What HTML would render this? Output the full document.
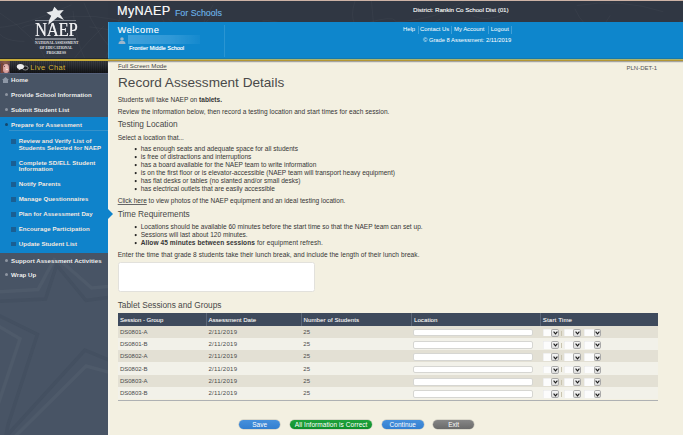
<!DOCTYPE html>
<html><head><meta charset="utf-8"><style>
html,body{margin:0;padding:0;width:683px;height:435px;overflow:hidden;background:#f3f0e1;font-family:"Liberation Sans",sans-serif;}
u{text-decoration:underline;}
</style></head><body>
<div style="position:absolute;left:0px;top:0px;width:683px;height:1px;background:#cdb3a6"></div>
<div style="position:absolute;left:0px;top:1px;width:683px;height:21px;background:#303743"></div>
<div style="position:absolute;left:0px;top:1px;width:108px;height:58px;background:#313844"></div>
<svg style="position:absolute;left:0;top:1px" width="683" height="58" viewBox="0 1 683 58"><path d="M213.2 4.8 Q207.5 14.0 199.6 31.2 M21.8 28.0 Q35.3 18.8 74.6 34.2 M285.7 48.7 Q307.8 69.7 322.2 63.7 M395.5 20.8 Q392.3 15.5 367.6 22.9 M83.9 2.7 Q96.4 37.3 128.0 67.0 M440.0 19.2 Q424.6 24.8 435.7 48.0 M469.9 22.8 Q485.9 43.1 504.7 75.4 M552.0 40.4 Q575.2 73.3 596.8 83.7 M505.2 13.7 Q486.4 22.4 472.6 15.7 M89.4 26.8 Q131.3 33.2 157.3 35.2 M610.3 15.4 Q594.4 40.1 573.7 67.4 M584.8 56.4 Q574.4 96.4 590.3 124.3 M445.9 59.6 Q424.1 76.2 409.1 82.6 M-3.8 25.0 Q-2.9 41.3 24.4 41.4 M73.1 11.1 Q74.3 48.0 100.6 88.0 M375.6 52.4 Q334.7 71.7 307.2 96.1 M238.3 52.5 Q211.4 46.7 203.8 57.1 M148.0 26.5 Q127.3 44.3 136.4 67.0 M245.9 31.8 Q211.8 40.5 176.7 42.1 M466.9 -1.5 Q442.1 19.2 394.9 22.0 M262.5 20.9 Q280.8 18.5 325.3 42.1 M130.3 5.5 Q122.2 7.5 144.0 30.5 M53.1 18.6 Q97.3 11.4 134.6 25.2 M161.6 17.6 Q178.9 47.4 175.3 47.6 M315.5 26.4 Q326.0 23.6 346.0 34.9 M576.8 5.5 Q620.9 -2.0 663.4 11.8 M371.1 -3.2 Q378.1 46.8 363.3 85.0 M168.0 18.8 Q201.5 46.0 233.1 56.5 M217.4 9.5 Q191.0 43.5 143.5 59.2 M569.2 43.1 Q587.1 48.1 613.6 81.4 M0.1 13.2 Q37.8 37.0 48.2 64.1 M654.7 59.2 Q622.2 54.5 606.4 66.1 M121.6 8.3 Q116.0 46.3 89.9 85.5 M450.1 47.0 Q495.2 64.4 515.7 64.9 M520.1 26.1 Q547.4 55.4 584.7 66.7 M679.6 20.7 Q699.5 52.0 706.0 103.2 M71.5 4.8 Q23.9 26.0 -2.5 27.6 M685.8 37.7 Q688.5 50.2 713.3 91.8 M679.0 37.2 Q673.5 91.1 671.9 122.6 M574.8 8.7 Q582.5 27.0 605.8 40.0 M166.7 22.2 Q200.9 37.8 243.9 55.9 M400.0 53.8 Q410.5 95.8 420.9 135.8 M356.9 -3.8 Q345.5 23.3 363.8 32.5 M104.1 25.8 Q79.0 49.6 64.3 72.3 M379.9 46.0 Q401.4 49.3 438.0 66.1 M536.0 28.0 Q541.2 62.8 521.7 101.0" fill="none" stroke="rgba(255,255,255,0.045)" stroke-width="0.8"/></svg>
<div style="position:absolute;left:108px;top:22px;width:575px;height:37px;background:#0e86cc"></div>
<div style="position:absolute;left:108px;top:22px;width:1px;height:37px;background:#3da0d8"></div>
<div style="position:absolute;left:224px;top:25px;width:1px;height:32px;background:#2a95d2"></div>
<div style="position:absolute;left:0px;top:58px;width:108px;height:1px;background:#25292c"></div>
<div style="position:absolute;left:0px;top:59px;width:108px;height:2px;background:#c9ad3a"></div>
<div style="position:absolute;left:108px;top:58px;width:575px;height:1px;background:#1779ab"></div>
<div style="position:absolute;left:108px;top:59px;width:575px;height:1px;background:#acb36c"></div>
<div style="position:absolute;left:108px;top:60px;width:575px;height:1px;background:#b39634"></div>
<div style="position:absolute;left:108px;top:61px;width:575px;height:1px;background:#a4a4a0"></div>
<div style="position:absolute;left:108px;top:62px;width:575px;height:1px;background:#e0ded4"></div>
<div style="position:absolute;left:108px;top:63px;width:2px;height:372px;background:#f6f4ea"></div>
<div style="position:absolute;left:117px;top:4.79px;font:normal 12.6px/1 'Liberation Sans', sans-serif;color:#f6f6f6;letter-spacing:0.4px;white-space:nowrap;text-shadow:0.2px 0 0 rgba(246,246,246,0.6)">MyNAEP</div>
<div style="position:absolute;left:175px;top:8.82px;font:normal 8.8px/1 'Liberation Sans', sans-serif;color:#68ade2;letter-spacing:0px;white-space:nowrap;text-shadow:0.15px 0 0 rgba(104,173,226,0.5)">For Schools</div>
<div style="position:absolute;left:117.6px;top:26.48px;font:normal 9.2px/1 'Liberation Sans', sans-serif;color:#f4f8fb;letter-spacing:0.52px;white-space:nowrap;text-shadow:0.15px 0 0 rgba(244,248,251,0.5)">Welcome</div>
<div style="position:absolute;left:128px;top:35.2px;width:72px;height:8.799999999999997px;background:linear-gradient(90deg,rgba(80,170,225,0.75),rgba(70,165,222,0.6) 60%,rgba(60,160,220,0.15));filter:blur(0.6px)"></div>
<svg style="position:absolute;left:118px;top:37px" width="8" height="7" viewBox="0 0 8 8"><circle cx="4" cy="2.4" r="2.0" fill="#9db6cb"/><path d="M0 8 C0 5 1.5 4.6 4 4.6 C6.5 4.6 8 5 8 8Z" fill="#9db6cb"/></svg>
<div style="position:absolute;left:129px;top:45.93px;font:normal 5.5px/1 'Liberation Sans', sans-serif;color:#ffffff;letter-spacing:0px;white-space:nowrap;text-shadow:0.3px 0 0 rgba(255,255,255,0.7)">Frontier Middle School</div>
<div style="position:absolute;left:413px;top:7.22px;font:normal 6.1px/1 'Liberation Sans', sans-serif;color:#f2f2f2;letter-spacing:0px;white-space:nowrap;text-shadow:0.25px 0 0 rgba(240,240,240,0.6)">District: Rankin Co School Dist (01)</div>
<div style="position:absolute;left:403px;top:27.19px;font:normal 5.9px/1 'Liberation Sans', sans-serif;color:#fff;letter-spacing:0px;white-space:nowrap;">Help</div>
<div style="position:absolute;left:420px;top:27.19px;font:normal 5.9px/1 'Liberation Sans', sans-serif;color:#fff;letter-spacing:0px;white-space:nowrap;">Contact Us</div>
<div style="position:absolute;left:454px;top:27.19px;font:normal 5.9px/1 'Liberation Sans', sans-serif;color:#fff;letter-spacing:0px;white-space:nowrap;">My Account</div>
<div style="position:absolute;left:490.8px;top:27.19px;font:normal 5.9px/1 'Liberation Sans', sans-serif;color:#fff;letter-spacing:0px;white-space:nowrap;">Logout</div>
<div style="position:absolute;left:417.7px;top:25.5px;width:0.6999999999999886px;height:8.0px;background:rgba(255,255,255,0.22)"></div>
<div style="position:absolute;left:451.4px;top:25.5px;width:0.6999999999999886px;height:8.0px;background:rgba(255,255,255,0.22)"></div>
<div style="position:absolute;left:487.5px;top:25.5px;width:0.6999999999999886px;height:8.0px;background:rgba(255,255,255,0.22)"></div>
<div style="position:absolute;left:511px;top:25.5px;width:0.6999999999999886px;height:8.0px;background:rgba(255,255,255,0.22)"></div>
<div style="position:absolute;left:423px;top:38.07px;font:normal 5.8px/1 'Liberation Sans', sans-serif;color:#fff;letter-spacing:0px;white-space:nowrap;">&copy; Grade 8 Assessment: 2/11/2019</div>
<div style="position:absolute;left:0px;top:61px;width:108px;height:11.799999999999997px;background:repeating-linear-gradient(90deg,rgba(0,0,0,0.18) 0 1px,transparent 1px 2px),linear-gradient(#3a3d43,#2d3036 35%,#1d1f23 75%,#141518)"></div>
<div style="position:absolute;left:0px;top:73px;width:108px;height:362px;background:#485465"></div>
<div style="position:absolute;left:0px;top:72.8px;width:108px;height:1.2000000000000028px;background:#55607a"></div>
<svg style="position:absolute;left:0;top:240px" width="108" height="195" viewBox="0 240 108 195"><g fill="none" stroke-width="3.5" stroke-linejoin="miter"><path d="M-5 301.5 L45.5 299 L56.6 265 L86 300.5 L115 296.5 M-5 313.5 L37.4 334.4 L8 425 L5 440 M2.9 440 L84.8 350.2 L115 362.5" stroke="rgba(25,33,45,0.08)"/><path d="M-5 292 L38 289.5 L55 258 M62 262 L91.7 288 L115 286 M-5 324 L20 338.7 L-2 405 M11.5 440 L86.2 366 L115 374" stroke="rgba(255,255,255,0.035)"/></g></svg>
<div style="position:absolute;left:0px;top:117px;width:108px;height:135.5px;background:#0f83cb"></div>
<div style="position:absolute;left:108px;top:209px;width:0;height:0;border-top:5px solid transparent;border-bottom:5px solid transparent;border-left:5px solid #0f83cb"></div>
<div style="position:absolute;left:0px;top:61.2px;width:9.6px;height:11.599999999999994px;background:#5a3f47"></div>
<div style="position:absolute;left:0px;top:61.2px;width:9.6px;height:3.299999999999997px;background:linear-gradient(90deg,#6d4a4a,#8a5a4c 50%,#6a4a48)"></div>
<div style="position:absolute;left:0.6px;top:63px;width:2.9px;height:9.799999999999997px;background:#7a4438"></div>
<div style="position:absolute;left:2.8px;top:63.6px;width:5.8px;height:9.199999999999996px;background:radial-gradient(ellipse at 55% 40%,#eec6c0,#d49a98 65%,#b8787a);border-radius:40% 45% 30% 30%"></div>
<div style="position:absolute;left:6.3px;top:69.0px;width:1.7000000000000002px;height:1.4000000000000057px;background:#f6f0ea;border-radius:40%"></div>
<div style="position:absolute;left:4.2px;top:66.2px;width:1.2000000000000002px;height:0.7000000000000028px;background:#7a5258"></div>
<div style="position:absolute;left:30.3px;top:63.72px;font:normal 7.5px/1 'Liberation Sans', sans-serif;color:#d8b63a;letter-spacing:0.4px;white-space:nowrap;">Live Chat</div>
<svg style="position:absolute;left:16px;top:63px" width="13" height="8" viewBox="0 0 13 8"><ellipse cx="9.3" cy="5" rx="2.9" ry="2" fill="#1c1d20" stroke="#a8a8a8" stroke-width="0.8"/><ellipse cx="4.4" cy="3.6" rx="3.6" ry="2.7" fill="#ededed"/><path d="M3 5.5 L2.6 7.3 L5.5 5.8Z" fill="#ededed"/></svg>
<svg style="position:absolute;left:1.8px;top:77px" width="7" height="6" viewBox="0 0 7 6"><path d="M3.5 0 L7 3 L6 3 L6 6 L1 6 L1 3 L0 3Z" fill="#8d97a6"/></svg>
<div style="position:absolute;left:11px;top:76.63px;font:bold 6.2px/1 'Liberation Sans', sans-serif;color:#f2f4f6;letter-spacing:0px;white-space:nowrap;text-shadow:0.35px 0.35px 0.3px rgba(0,0,0,0.35);">Home</div>
<div style="position:absolute;left:4.9px;top:93.2px;width:3.0px;height:3.0px;background:#8e96a2;border-radius:50%"></div>
<div style="position:absolute;left:11px;top:91.93px;font:bold 6.2px/1 'Liberation Sans', sans-serif;color:#f2f4f6;letter-spacing:0px;white-space:nowrap;text-shadow:0.35px 0.35px 0.3px rgba(0,0,0,0.35);">Provide School Information</div>
<div style="position:absolute;left:4.9px;top:107.9px;width:3.0px;height:3.0px;background:#8e96a2;border-radius:50%"></div>
<div style="position:absolute;left:11px;top:106.63px;font:bold 6.2px/1 'Liberation Sans', sans-serif;color:#f2f4f6;letter-spacing:0px;white-space:nowrap;text-shadow:0.35px 0.35px 0.3px rgba(0,0,0,0.35);">Submit Student List</div>
<div style="position:absolute;left:4.9px;top:122.9px;width:3.0px;height:3.0px;background:#14476c;border-radius:50%"></div>
<div style="position:absolute;left:11px;top:121.63px;font:bold 6.2px/1 'Liberation Sans', sans-serif;color:#f2f4f6;letter-spacing:0px;white-space:nowrap;text-shadow:0.35px 0.35px 0.3px rgba(0,0,0,0.35);">Prepare for Assessment</div>
<div style="position:absolute;left:8.7px;top:130px;width:99.3px;height:1px;background:#3592cb"></div>
<div style="position:absolute;left:18.7px;top:137.73px;font:bold 6.2px/1 'Liberation Sans', sans-serif;color:#f2f4f6;letter-spacing:0px;white-space:nowrap;text-shadow:0.35px 0.35px 0.3px rgba(0,0,0,0.35);">Review and Verify List of</div>
<div style="position:absolute;left:18.7px;top:144.53px;font:bold 6.2px/1 'Liberation Sans', sans-serif;color:#f2f4f6;letter-spacing:0px;white-space:nowrap;text-shadow:0.35px 0.35px 0.3px rgba(0,0,0,0.35);">Students Selected for NAEP</div>
<div style="position:absolute;left:18.7px;top:159.83px;font:bold 6.2px/1 'Liberation Sans', sans-serif;color:#f2f4f6;letter-spacing:0px;white-space:nowrap;text-shadow:0.35px 0.35px 0.3px rgba(0,0,0,0.35);">Complete SD/ELL Student</div>
<div style="position:absolute;left:18.7px;top:165.83px;font:bold 6.2px/1 'Liberation Sans', sans-serif;color:#f2f4f6;letter-spacing:0px;white-space:nowrap;text-shadow:0.35px 0.35px 0.3px rgba(0,0,0,0.35);">Information</div>
<div style="position:absolute;left:18.7px;top:181.13px;font:bold 6.2px/1 'Liberation Sans', sans-serif;color:#f2f4f6;letter-spacing:0px;white-space:nowrap;text-shadow:0.35px 0.35px 0.3px rgba(0,0,0,0.35);">Notify Parents</div>
<div style="position:absolute;left:18.7px;top:195.83px;font:bold 6.2px/1 'Liberation Sans', sans-serif;color:#f2f4f6;letter-spacing:0px;white-space:nowrap;text-shadow:0.35px 0.35px 0.3px rgba(0,0,0,0.35);">Manage Questionnaires</div>
<div style="position:absolute;left:18.7px;top:210.83px;font:bold 6.2px/1 'Liberation Sans', sans-serif;color:#f2f4f6;letter-spacing:0px;white-space:nowrap;text-shadow:0.35px 0.35px 0.3px rgba(0,0,0,0.35);">Plan for Assessment Day</div>
<div style="position:absolute;left:18.7px;top:225.73px;font:bold 6.2px/1 'Liberation Sans', sans-serif;color:#f2f4f6;letter-spacing:0px;white-space:nowrap;text-shadow:0.35px 0.35px 0.3px rgba(0,0,0,0.35);">Encourage Participation</div>
<div style="position:absolute;left:18.7px;top:240.53px;font:bold 6.2px/1 'Liberation Sans', sans-serif;color:#f2f4f6;letter-spacing:0px;white-space:nowrap;text-shadow:0.35px 0.35px 0.3px rgba(0,0,0,0.35);">Update Student List</div>
<div style="position:absolute;left:11px;top:139px;width:4.5px;height:4.5px;background:#1a5f93"></div>
<div style="position:absolute;left:11px;top:161.1px;width:4.5px;height:4.5px;background:#1a5f93"></div>
<div style="position:absolute;left:11px;top:182.4px;width:4.5px;height:4.5px;background:#1a5f93"></div>
<div style="position:absolute;left:11px;top:197.1px;width:4.5px;height:4.5px;background:#1a5f93"></div>
<div style="position:absolute;left:11px;top:212.1px;width:4.5px;height:4.5px;background:#1a5f93"></div>
<div style="position:absolute;left:11px;top:227px;width:4.5px;height:4.5px;background:#1a5f93"></div>
<div style="position:absolute;left:11px;top:241.8px;width:4.5px;height:4.5px;background:#1a5f93"></div>
<div style="position:absolute;left:4.9px;top:259.1px;width:3.0px;height:3.0px;background:#8e96a2;border-radius:50%"></div>
<div style="position:absolute;left:11px;top:257.83px;font:bold 6.2px/1 'Liberation Sans', sans-serif;color:#f2f4f6;letter-spacing:0px;white-space:nowrap;text-shadow:0.35px 0.35px 0.3px rgba(0,0,0,0.35);">Support Assessment Activities</div>
<div style="position:absolute;left:4.9px;top:273.1px;width:3.0px;height:3.0px;background:#8e96a2;border-radius:50%"></div>
<div style="position:absolute;left:11px;top:271.83px;font:bold 6.2px/1 'Liberation Sans', sans-serif;color:#f2f4f6;letter-spacing:0px;white-space:nowrap;text-shadow:0.35px 0.35px 0.3px rgba(0,0,0,0.35);">Wrap Up</div>
<div style="position:absolute;left:118px;top:63.37px;font:normal 6.15px/1 'Liberation Sans', sans-serif;color:#444;letter-spacing:0.04px;white-space:nowrap;"><u style="text-decoration-thickness:0.7px;text-decoration-color:#777;text-underline-offset:0.6px">Full Screen Mode</u></div>
<div style="position:absolute;left:626.5px;top:64.50px;font:normal 6.0px/1 'Liberation Sans', sans-serif;color:#555;letter-spacing:0px;white-space:nowrap;">PLN-DET-1</div>
<div style="position:absolute;left:118px;top:75.54px;font:normal 13.6px/1 'Liberation Sans', sans-serif;color:#4a4a4a;letter-spacing:0px;white-space:nowrap;">Record Assessment Details</div>
<div style="position:absolute;left:117.7px;top:96.53px;font:normal 6.55px/1 'Liberation Sans', sans-serif;color:#363636;letter-spacing:0px;white-space:nowrap;">Students will take NAEP on <b>tablets.</b></div>
<div style="position:absolute;left:117.7px;top:108.93px;font:normal 6.55px/1 'Liberation Sans', sans-serif;color:#363636;letter-spacing:0.03px;white-space:nowrap;">Review the information below, then record a testing location and start times for each session.</div>
<div style="position:absolute;left:117.7px;top:119.84px;font:normal 8.3px/1 'Liberation Sans', sans-serif;color:#484848;letter-spacing:0px;white-space:nowrap;">Testing Location</div>
<div style="position:absolute;left:117.7px;top:134.53px;font:normal 6.55px/1 'Liberation Sans', sans-serif;color:#363636;letter-spacing:0px;white-space:nowrap;">Select a location that...</div>
<svg style="position:absolute;left:134px;top:146.70px" width="4" height="4" viewBox="0 0 4 4"><circle cx="1.7" cy="2.1" r="1.05" fill="#222"/></svg>
<div style="position:absolute;left:140.7px;top:145.63px;font:normal 6.55px/1 'Liberation Sans', sans-serif;color:#363636;letter-spacing:0px;white-space:nowrap;">has enough seats and adequate space for all students</div>
<svg style="position:absolute;left:134px;top:154.70px" width="4" height="4" viewBox="0 0 4 4"><circle cx="1.7" cy="2.1" r="1.05" fill="#222"/></svg>
<div style="position:absolute;left:140.7px;top:153.63px;font:normal 6.55px/1 'Liberation Sans', sans-serif;color:#363636;letter-spacing:0px;white-space:nowrap;">is free of distractions and interruptions</div>
<svg style="position:absolute;left:134px;top:163.10px" width="4" height="4" viewBox="0 0 4 4"><circle cx="1.7" cy="2.1" r="1.05" fill="#222"/></svg>
<div style="position:absolute;left:140.7px;top:162.03px;font:normal 6.55px/1 'Liberation Sans', sans-serif;color:#363636;letter-spacing:0px;white-space:nowrap;">has a board available for the NAEP team to write information</div>
<svg style="position:absolute;left:134px;top:171.00px" width="4" height="4" viewBox="0 0 4 4"><circle cx="1.7" cy="2.1" r="1.05" fill="#222"/></svg>
<div style="position:absolute;left:140.7px;top:169.93px;font:normal 6.55px/1 'Liberation Sans', sans-serif;color:#363636;letter-spacing:0px;white-space:nowrap;">is on the first floor or is elevator-accessible (NAEP team will transport heavy equipment)</div>
<svg style="position:absolute;left:134px;top:179.10px" width="4" height="4" viewBox="0 0 4 4"><circle cx="1.7" cy="2.1" r="1.05" fill="#222"/></svg>
<div style="position:absolute;left:140.7px;top:178.03px;font:normal 6.55px/1 'Liberation Sans', sans-serif;color:#363636;letter-spacing:0px;white-space:nowrap;">has flat desks or tables (no slanted and/or small desks)</div>
<svg style="position:absolute;left:134px;top:186.70px" width="4" height="4" viewBox="0 0 4 4"><circle cx="1.7" cy="2.1" r="1.05" fill="#222"/></svg>
<div style="position:absolute;left:140.7px;top:185.63px;font:normal 6.55px/1 'Liberation Sans', sans-serif;color:#363636;letter-spacing:0px;white-space:nowrap;">has electrical outlets that are easily accessible</div>
<div style="position:absolute;left:117.7px;top:197.63px;font:normal 6.55px/1 'Liberation Sans', sans-serif;color:#363636;letter-spacing:0px;white-space:nowrap;"><u style="text-decoration-thickness:0.7px;text-decoration-color:#666;text-underline-offset:0.5px">Click here</u> to view photos of the NAEP equipment and an ideal testing location.</div>
<div style="position:absolute;left:117.7px;top:209.75px;font:normal 8.3px/1 'Liberation Sans', sans-serif;color:#484848;letter-spacing:0px;white-space:nowrap;">Time Requirements</div>
<svg style="position:absolute;left:134px;top:225.10px" width="4" height="4" viewBox="0 0 4 4"><circle cx="1.7" cy="2.1" r="1.05" fill="#222"/></svg>
<div style="position:absolute;left:140.7px;top:224.03px;font:normal 6.55px/1 'Liberation Sans', sans-serif;color:#363636;letter-spacing:0px;white-space:nowrap;">Locations should be available 60 minutes before the start time so that the NAEP team can set up.</div>
<svg style="position:absolute;left:134px;top:232.80px" width="4" height="4" viewBox="0 0 4 4"><circle cx="1.7" cy="2.1" r="1.05" fill="#222"/></svg>
<div style="position:absolute;left:140.7px;top:231.73px;font:normal 6.55px/1 'Liberation Sans', sans-serif;color:#363636;letter-spacing:0px;white-space:nowrap;">Sessions will last about 120 minutes.</div>
<svg style="position:absolute;left:134px;top:240.80px" width="4" height="4" viewBox="0 0 4 4"><circle cx="1.7" cy="2.1" r="1.05" fill="#222"/></svg>
<div style="position:absolute;left:140.7px;top:239.73px;font:normal 6.55px/1 'Liberation Sans', sans-serif;color:#363636;letter-spacing:0.09px;white-space:nowrap;"><b>Allow 45 minutes between sessions</b> for equipment refresh.</div>
<div style="position:absolute;left:117.7px;top:251.63px;font:normal 6.55px/1 'Liberation Sans', sans-serif;color:#363636;letter-spacing:0.06px;white-space:nowrap;">Enter the time that grade 8 students take their lunch break, and include the length of their lunch break.</div>
<div style="position:absolute;left:117.7px;top:262.1px;width:197.10000000000002px;height:30.299999999999955px;background:#fff;border:1px solid #e2e1dc;border-radius:2.5px;box-sizing:border-box"></div>
<div style="position:absolute;left:117.7px;top:301.05px;font:normal 8.3px/1 'Liberation Sans', sans-serif;color:#484848;letter-spacing:0px;white-space:nowrap;">Tablet Sessions and Groups</div>
<div style="position:absolute;left:117.7px;top:313px;width:540.3px;height:12.5px;background:#3e4a5c"></div>
<div style="position:absolute;left:206.2px;top:313px;width:1.0px;height:12.5px;background:#5a6678"></div>
<div style="position:absolute;left:301.2px;top:313px;width:1.0px;height:12.5px;background:#5a6678"></div>
<div style="position:absolute;left:411px;top:313px;width:1px;height:12.5px;background:#5a6678"></div>
<div style="position:absolute;left:540.3px;top:313px;width:1.0px;height:12.5px;background:#5a6678"></div>
<div style="position:absolute;left:119.9px;top:316.70px;font:normal 6.0px/1 'Liberation Sans', sans-serif;color:#f0f0f0;letter-spacing:0px;white-space:nowrap;text-shadow:0.2px 0 0 rgba(240,240,240,0.5)">Session - Group</div>
<div style="position:absolute;left:208.4px;top:316.70px;font:normal 6.0px/1 'Liberation Sans', sans-serif;color:#f0f0f0;letter-spacing:0.04px;white-space:nowrap;text-shadow:0.2px 0 0 rgba(240,240,240,0.5)">Assessment Date</div>
<div style="position:absolute;left:303.6px;top:316.70px;font:normal 6.0px/1 'Liberation Sans', sans-serif;color:#f0f0f0;letter-spacing:0.12px;white-space:nowrap;text-shadow:0.2px 0 0 rgba(240,240,240,0.5)">Number of Students</div>
<div style="position:absolute;left:414px;top:316.70px;font:normal 6.0px/1 'Liberation Sans', sans-serif;color:#f0f0f0;letter-spacing:0.1px;white-space:nowrap;text-shadow:0.2px 0 0 rgba(240,240,240,0.5)">Location</div>
<div style="position:absolute;left:542.8px;top:316.70px;font:normal 6.0px/1 'Liberation Sans', sans-serif;color:#f0f0f0;letter-spacing:0.2px;white-space:nowrap;text-shadow:0.2px 0 0 rgba(240,240,240,0.5)">Start Time</div>
<div style="position:absolute;left:117.7px;top:325.5px;width:540.3px;height:12.329999999999984px;background:#e3e0d4"></div>
<div style="position:absolute;left:119.9px;top:328.60px;font:normal 6.0px/1 'Liberation Sans', sans-serif;color:#4a4a4a;letter-spacing:0px;white-space:nowrap;">DS0801-A</div>
<div style="position:absolute;left:208.4px;top:328.60px;font:normal 6.0px/1 'Liberation Sans', sans-serif;color:#4a4a4a;letter-spacing:0.3px;white-space:nowrap;">2/11/2019</div>
<div style="position:absolute;left:303.3px;top:328.60px;font:normal 6.0px/1 'Liberation Sans', sans-serif;color:#4a4a4a;letter-spacing:0px;white-space:nowrap;">25</div>
<div style="position:absolute;left:413.4px;top:328.6px;width:119.60000000000002px;height:7.699999999999989px;background:#fff;border:1px solid #d6d6d2;border-radius:2px;box-sizing:border-box"></div>
<div style="position:absolute;left:543.2px;top:328.8px;width:8.200000000000045px;height:7.699999999999989px;background:#fcfcfc;box-shadow:inset 0.5px 0.5px 0 #e4e4e4"></div>
<div style="position:absolute;left:551.4000000000001px;top:328.7px;width:7.6px;height:7.9px;box-sizing:border-box;border:1px solid #a9a9a9;border-radius:1.8px;background:linear-gradient(#f6f6f6,#dcdcdc)"></div>
<svg style="position:absolute;left:552.9000000000001px;top:330.9px" width="5" height="4" viewBox="0 0 5 4"><path d="M0.6 0.7 L2.5 2.8 L4.4 0.7" fill="none" stroke="#1a1a1a" stroke-width="1.15"/></svg>
<div style="position:absolute;left:564.4px;top:328.8px;width:9.0px;height:7.699999999999989px;background:#fcfcfc;box-shadow:inset 0.5px 0.5px 0 #e4e4e4"></div>
<div style="position:absolute;left:573.4px;top:328.7px;width:7.6px;height:7.9px;box-sizing:border-box;border:1px solid #a9a9a9;border-radius:1.8px;background:linear-gradient(#f6f6f6,#dcdcdc)"></div>
<svg style="position:absolute;left:574.9px;top:330.9px" width="5" height="4" viewBox="0 0 5 4"><path d="M0.6 0.7 L2.5 2.8 L4.4 0.7" fill="none" stroke="#1a1a1a" stroke-width="1.15"/></svg>
<div style="position:absolute;left:583.8px;top:328.8px;width:10.0px;height:7.699999999999989px;background:#fcfcfc;box-shadow:inset 0.5px 0.5px 0 #e4e4e4"></div>
<div style="position:absolute;left:593.8px;top:328.7px;width:7.6px;height:7.9px;box-sizing:border-box;border:1px solid #a9a9a9;border-radius:1.8px;background:linear-gradient(#f6f6f6,#dcdcdc)"></div>
<svg style="position:absolute;left:595.3px;top:330.9px" width="5" height="4" viewBox="0 0 5 4"><path d="M0.6 0.7 L2.5 2.8 L4.4 0.7" fill="none" stroke="#1a1a1a" stroke-width="1.15"/></svg>
<div style="position:absolute;left:561px;top:330.5px;width:0.7999999999999545px;height:5.0px;background:#c9c4b0"></div>
<div style="position:absolute;left:117.7px;top:337.83px;width:540.3px;height:12.329999999999984px;background:#f2f1e9"></div>
<div style="position:absolute;left:119.9px;top:340.93px;font:normal 6.0px/1 'Liberation Sans', sans-serif;color:#4a4a4a;letter-spacing:0px;white-space:nowrap;">DS0801-B</div>
<div style="position:absolute;left:208.4px;top:340.93px;font:normal 6.0px/1 'Liberation Sans', sans-serif;color:#4a4a4a;letter-spacing:0.3px;white-space:nowrap;">2/11/2019</div>
<div style="position:absolute;left:303.3px;top:340.93px;font:normal 6.0px/1 'Liberation Sans', sans-serif;color:#4a4a4a;letter-spacing:0px;white-space:nowrap;">25</div>
<div style="position:absolute;left:413.4px;top:340.93px;width:119.60000000000002px;height:7.699999999999989px;background:#fff;border:1px solid #d6d6d2;border-radius:2px;box-sizing:border-box"></div>
<div style="position:absolute;left:543.2px;top:341.13px;width:8.200000000000045px;height:7.699999999999989px;background:#fcfcfc;box-shadow:inset 0.5px 0.5px 0 #e4e4e4"></div>
<div style="position:absolute;left:551.4000000000001px;top:341.03px;width:7.6px;height:7.9px;box-sizing:border-box;border:1px solid #a9a9a9;border-radius:1.8px;background:linear-gradient(#f6f6f6,#dcdcdc)"></div>
<svg style="position:absolute;left:552.9000000000001px;top:343.22999999999996px" width="5" height="4" viewBox="0 0 5 4"><path d="M0.6 0.7 L2.5 2.8 L4.4 0.7" fill="none" stroke="#1a1a1a" stroke-width="1.15"/></svg>
<div style="position:absolute;left:564.4px;top:341.13px;width:9.0px;height:7.699999999999989px;background:#fcfcfc;box-shadow:inset 0.5px 0.5px 0 #e4e4e4"></div>
<div style="position:absolute;left:573.4px;top:341.03px;width:7.6px;height:7.9px;box-sizing:border-box;border:1px solid #a9a9a9;border-radius:1.8px;background:linear-gradient(#f6f6f6,#dcdcdc)"></div>
<svg style="position:absolute;left:574.9px;top:343.22999999999996px" width="5" height="4" viewBox="0 0 5 4"><path d="M0.6 0.7 L2.5 2.8 L4.4 0.7" fill="none" stroke="#1a1a1a" stroke-width="1.15"/></svg>
<div style="position:absolute;left:583.8px;top:341.13px;width:10.0px;height:7.699999999999989px;background:#fcfcfc;box-shadow:inset 0.5px 0.5px 0 #e4e4e4"></div>
<div style="position:absolute;left:593.8px;top:341.03px;width:7.6px;height:7.9px;box-sizing:border-box;border:1px solid #a9a9a9;border-radius:1.8px;background:linear-gradient(#f6f6f6,#dcdcdc)"></div>
<svg style="position:absolute;left:595.3px;top:343.22999999999996px" width="5" height="4" viewBox="0 0 5 4"><path d="M0.6 0.7 L2.5 2.8 L4.4 0.7" fill="none" stroke="#1a1a1a" stroke-width="1.15"/></svg>
<div style="position:absolute;left:561px;top:342.83px;width:0.7999999999999545px;height:5.0px;background:#c9c4b0"></div>
<div style="position:absolute;left:117.7px;top:350.16px;width:540.3px;height:12.329999999999984px;background:#e3e0d4"></div>
<div style="position:absolute;left:119.9px;top:353.26px;font:normal 6.0px/1 'Liberation Sans', sans-serif;color:#4a4a4a;letter-spacing:0px;white-space:nowrap;">DS0802-A</div>
<div style="position:absolute;left:208.4px;top:353.26px;font:normal 6.0px/1 'Liberation Sans', sans-serif;color:#4a4a4a;letter-spacing:0.3px;white-space:nowrap;">2/11/2019</div>
<div style="position:absolute;left:303.3px;top:353.26px;font:normal 6.0px/1 'Liberation Sans', sans-serif;color:#4a4a4a;letter-spacing:0px;white-space:nowrap;">25</div>
<div style="position:absolute;left:413.4px;top:353.26000000000005px;width:119.60000000000002px;height:7.699999999999989px;background:#fff;border:1px solid #d6d6d2;border-radius:2px;box-sizing:border-box"></div>
<div style="position:absolute;left:543.2px;top:353.46000000000004px;width:8.200000000000045px;height:7.699999999999989px;background:#fcfcfc;box-shadow:inset 0.5px 0.5px 0 #e4e4e4"></div>
<div style="position:absolute;left:551.4000000000001px;top:353.36px;width:7.6px;height:7.9px;box-sizing:border-box;border:1px solid #a9a9a9;border-radius:1.8px;background:linear-gradient(#f6f6f6,#dcdcdc)"></div>
<svg style="position:absolute;left:552.9000000000001px;top:355.56px" width="5" height="4" viewBox="0 0 5 4"><path d="M0.6 0.7 L2.5 2.8 L4.4 0.7" fill="none" stroke="#1a1a1a" stroke-width="1.15"/></svg>
<div style="position:absolute;left:564.4px;top:353.46000000000004px;width:9.0px;height:7.699999999999989px;background:#fcfcfc;box-shadow:inset 0.5px 0.5px 0 #e4e4e4"></div>
<div style="position:absolute;left:573.4px;top:353.36px;width:7.6px;height:7.9px;box-sizing:border-box;border:1px solid #a9a9a9;border-radius:1.8px;background:linear-gradient(#f6f6f6,#dcdcdc)"></div>
<svg style="position:absolute;left:574.9px;top:355.56px" width="5" height="4" viewBox="0 0 5 4"><path d="M0.6 0.7 L2.5 2.8 L4.4 0.7" fill="none" stroke="#1a1a1a" stroke-width="1.15"/></svg>
<div style="position:absolute;left:583.8px;top:353.46000000000004px;width:10.0px;height:7.699999999999989px;background:#fcfcfc;box-shadow:inset 0.5px 0.5px 0 #e4e4e4"></div>
<div style="position:absolute;left:593.8px;top:353.36px;width:7.6px;height:7.9px;box-sizing:border-box;border:1px solid #a9a9a9;border-radius:1.8px;background:linear-gradient(#f6f6f6,#dcdcdc)"></div>
<svg style="position:absolute;left:595.3px;top:355.56px" width="5" height="4" viewBox="0 0 5 4"><path d="M0.6 0.7 L2.5 2.8 L4.4 0.7" fill="none" stroke="#1a1a1a" stroke-width="1.15"/></svg>
<div style="position:absolute;left:561px;top:355.16px;width:0.7999999999999545px;height:5.0px;background:#c9c4b0"></div>
<div style="position:absolute;left:117.7px;top:362.49px;width:540.3px;height:12.329999999999984px;background:#f2f1e9"></div>
<div style="position:absolute;left:119.9px;top:365.59px;font:normal 6.0px/1 'Liberation Sans', sans-serif;color:#4a4a4a;letter-spacing:0px;white-space:nowrap;">DS0802-B</div>
<div style="position:absolute;left:208.4px;top:365.59px;font:normal 6.0px/1 'Liberation Sans', sans-serif;color:#4a4a4a;letter-spacing:0.3px;white-space:nowrap;">2/11/2019</div>
<div style="position:absolute;left:303.3px;top:365.59px;font:normal 6.0px/1 'Liberation Sans', sans-serif;color:#4a4a4a;letter-spacing:0px;white-space:nowrap;">25</div>
<div style="position:absolute;left:413.4px;top:365.59000000000003px;width:119.60000000000002px;height:7.699999999999989px;background:#fff;border:1px solid #d6d6d2;border-radius:2px;box-sizing:border-box"></div>
<div style="position:absolute;left:543.2px;top:365.79px;width:8.200000000000045px;height:7.699999999999989px;background:#fcfcfc;box-shadow:inset 0.5px 0.5px 0 #e4e4e4"></div>
<div style="position:absolute;left:551.4000000000001px;top:365.69px;width:7.6px;height:7.9px;box-sizing:border-box;border:1px solid #a9a9a9;border-radius:1.8px;background:linear-gradient(#f6f6f6,#dcdcdc)"></div>
<svg style="position:absolute;left:552.9000000000001px;top:367.89px" width="5" height="4" viewBox="0 0 5 4"><path d="M0.6 0.7 L2.5 2.8 L4.4 0.7" fill="none" stroke="#1a1a1a" stroke-width="1.15"/></svg>
<div style="position:absolute;left:564.4px;top:365.79px;width:9.0px;height:7.699999999999989px;background:#fcfcfc;box-shadow:inset 0.5px 0.5px 0 #e4e4e4"></div>
<div style="position:absolute;left:573.4px;top:365.69px;width:7.6px;height:7.9px;box-sizing:border-box;border:1px solid #a9a9a9;border-radius:1.8px;background:linear-gradient(#f6f6f6,#dcdcdc)"></div>
<svg style="position:absolute;left:574.9px;top:367.89px" width="5" height="4" viewBox="0 0 5 4"><path d="M0.6 0.7 L2.5 2.8 L4.4 0.7" fill="none" stroke="#1a1a1a" stroke-width="1.15"/></svg>
<div style="position:absolute;left:583.8px;top:365.79px;width:10.0px;height:7.699999999999989px;background:#fcfcfc;box-shadow:inset 0.5px 0.5px 0 #e4e4e4"></div>
<div style="position:absolute;left:593.8px;top:365.69px;width:7.6px;height:7.9px;box-sizing:border-box;border:1px solid #a9a9a9;border-radius:1.8px;background:linear-gradient(#f6f6f6,#dcdcdc)"></div>
<svg style="position:absolute;left:595.3px;top:367.89px" width="5" height="4" viewBox="0 0 5 4"><path d="M0.6 0.7 L2.5 2.8 L4.4 0.7" fill="none" stroke="#1a1a1a" stroke-width="1.15"/></svg>
<div style="position:absolute;left:561px;top:367.49px;width:0.7999999999999545px;height:5.0px;background:#c9c4b0"></div>
<div style="position:absolute;left:117.7px;top:374.82px;width:540.3px;height:12.329999999999984px;background:#e3e0d4"></div>
<div style="position:absolute;left:119.9px;top:377.92px;font:normal 6.0px/1 'Liberation Sans', sans-serif;color:#4a4a4a;letter-spacing:0px;white-space:nowrap;">DS0803-A</div>
<div style="position:absolute;left:208.4px;top:377.92px;font:normal 6.0px/1 'Liberation Sans', sans-serif;color:#4a4a4a;letter-spacing:0.3px;white-space:nowrap;">2/11/2019</div>
<div style="position:absolute;left:303.3px;top:377.92px;font:normal 6.0px/1 'Liberation Sans', sans-serif;color:#4a4a4a;letter-spacing:0px;white-space:nowrap;">25</div>
<div style="position:absolute;left:413.4px;top:377.92px;width:119.60000000000002px;height:7.699999999999989px;background:#fff;border:1px solid #d6d6d2;border-radius:2px;box-sizing:border-box"></div>
<div style="position:absolute;left:543.2px;top:378.12px;width:8.200000000000045px;height:7.699999999999989px;background:#fcfcfc;box-shadow:inset 0.5px 0.5px 0 #e4e4e4"></div>
<div style="position:absolute;left:551.4000000000001px;top:378.02px;width:7.6px;height:7.9px;box-sizing:border-box;border:1px solid #a9a9a9;border-radius:1.8px;background:linear-gradient(#f6f6f6,#dcdcdc)"></div>
<svg style="position:absolute;left:552.9000000000001px;top:380.21999999999997px" width="5" height="4" viewBox="0 0 5 4"><path d="M0.6 0.7 L2.5 2.8 L4.4 0.7" fill="none" stroke="#1a1a1a" stroke-width="1.15"/></svg>
<div style="position:absolute;left:564.4px;top:378.12px;width:9.0px;height:7.699999999999989px;background:#fcfcfc;box-shadow:inset 0.5px 0.5px 0 #e4e4e4"></div>
<div style="position:absolute;left:573.4px;top:378.02px;width:7.6px;height:7.9px;box-sizing:border-box;border:1px solid #a9a9a9;border-radius:1.8px;background:linear-gradient(#f6f6f6,#dcdcdc)"></div>
<svg style="position:absolute;left:574.9px;top:380.21999999999997px" width="5" height="4" viewBox="0 0 5 4"><path d="M0.6 0.7 L2.5 2.8 L4.4 0.7" fill="none" stroke="#1a1a1a" stroke-width="1.15"/></svg>
<div style="position:absolute;left:583.8px;top:378.12px;width:10.0px;height:7.699999999999989px;background:#fcfcfc;box-shadow:inset 0.5px 0.5px 0 #e4e4e4"></div>
<div style="position:absolute;left:593.8px;top:378.02px;width:7.6px;height:7.9px;box-sizing:border-box;border:1px solid #a9a9a9;border-radius:1.8px;background:linear-gradient(#f6f6f6,#dcdcdc)"></div>
<svg style="position:absolute;left:595.3px;top:380.21999999999997px" width="5" height="4" viewBox="0 0 5 4"><path d="M0.6 0.7 L2.5 2.8 L4.4 0.7" fill="none" stroke="#1a1a1a" stroke-width="1.15"/></svg>
<div style="position:absolute;left:561px;top:379.82px;width:0.7999999999999545px;height:5.0px;background:#c9c4b0"></div>
<div style="position:absolute;left:117.7px;top:387.15px;width:540.3px;height:12.329999999999984px;background:#f2f1e9"></div>
<div style="position:absolute;left:119.9px;top:390.25px;font:normal 6.0px/1 'Liberation Sans', sans-serif;color:#4a4a4a;letter-spacing:0px;white-space:nowrap;">DS0803-B</div>
<div style="position:absolute;left:208.4px;top:390.25px;font:normal 6.0px/1 'Liberation Sans', sans-serif;color:#4a4a4a;letter-spacing:0.3px;white-space:nowrap;">2/11/2019</div>
<div style="position:absolute;left:303.3px;top:390.25px;font:normal 6.0px/1 'Liberation Sans', sans-serif;color:#4a4a4a;letter-spacing:0px;white-space:nowrap;">25</div>
<div style="position:absolute;left:413.4px;top:390.25px;width:119.60000000000002px;height:7.699999999999989px;background:#fff;border:1px solid #d6d6d2;border-radius:2px;box-sizing:border-box"></div>
<div style="position:absolute;left:543.2px;top:390.45px;width:8.200000000000045px;height:7.699999999999989px;background:#fcfcfc;box-shadow:inset 0.5px 0.5px 0 #e4e4e4"></div>
<div style="position:absolute;left:551.4000000000001px;top:390.34999999999997px;width:7.6px;height:7.9px;box-sizing:border-box;border:1px solid #a9a9a9;border-radius:1.8px;background:linear-gradient(#f6f6f6,#dcdcdc)"></div>
<svg style="position:absolute;left:552.9000000000001px;top:392.54999999999995px" width="5" height="4" viewBox="0 0 5 4"><path d="M0.6 0.7 L2.5 2.8 L4.4 0.7" fill="none" stroke="#1a1a1a" stroke-width="1.15"/></svg>
<div style="position:absolute;left:564.4px;top:390.45px;width:9.0px;height:7.699999999999989px;background:#fcfcfc;box-shadow:inset 0.5px 0.5px 0 #e4e4e4"></div>
<div style="position:absolute;left:573.4px;top:390.34999999999997px;width:7.6px;height:7.9px;box-sizing:border-box;border:1px solid #a9a9a9;border-radius:1.8px;background:linear-gradient(#f6f6f6,#dcdcdc)"></div>
<svg style="position:absolute;left:574.9px;top:392.54999999999995px" width="5" height="4" viewBox="0 0 5 4"><path d="M0.6 0.7 L2.5 2.8 L4.4 0.7" fill="none" stroke="#1a1a1a" stroke-width="1.15"/></svg>
<div style="position:absolute;left:583.8px;top:390.45px;width:10.0px;height:7.699999999999989px;background:#fcfcfc;box-shadow:inset 0.5px 0.5px 0 #e4e4e4"></div>
<div style="position:absolute;left:593.8px;top:390.34999999999997px;width:7.6px;height:7.9px;box-sizing:border-box;border:1px solid #a9a9a9;border-radius:1.8px;background:linear-gradient(#f6f6f6,#dcdcdc)"></div>
<svg style="position:absolute;left:595.3px;top:392.54999999999995px" width="5" height="4" viewBox="0 0 5 4"><path d="M0.6 0.7 L2.5 2.8 L4.4 0.7" fill="none" stroke="#1a1a1a" stroke-width="1.15"/></svg>
<div style="position:absolute;left:561px;top:392.15px;width:0.7999999999999545px;height:5.0px;background:#c9c4b0"></div>
<div style="position:absolute;left:117.7px;top:399.5px;width:540.3px;height:1.5px;background:#aeb1b3"></div>
<div style="position:absolute;left:239.2px;top:419.8px;width:41.10000000000002px;height:9.6px;border-radius:5px;background:linear-gradient(#4690dc,#337fd0);box-shadow:0 0 0 0.5px rgba(0,0,0,0.2)"></div>
<div style="position:absolute;left:239.2px;top:422.48px;width:41.10000000000002px;text-align:center;font:normal 6.5px/1 'Liberation Sans', sans-serif;color:#fff;white-space:nowrap;letter-spacing:0.06px">Save</div>
<div style="position:absolute;left:290.3px;top:419.8px;width:81.69999999999999px;height:9.6px;border-radius:5px;background:linear-gradient(#1fa23c,#0f8f2c);box-shadow:0 0 0 0.5px rgba(0,0,0,0.2)"></div>
<div style="position:absolute;left:290.3px;top:422.48px;width:81.69999999999999px;text-align:center;font:normal 6.5px/1 'Liberation Sans', sans-serif;color:#fff;white-space:nowrap;letter-spacing:0.06px">All Information is Correct</div>
<div style="position:absolute;left:382px;top:419.8px;width:41.5px;height:9.6px;border-radius:5px;background:linear-gradient(#4690dc,#337fd0);box-shadow:0 0 0 0.5px rgba(0,0,0,0.2)"></div>
<div style="position:absolute;left:382px;top:422.48px;width:41.5px;text-align:center;font:normal 6.5px/1 'Liberation Sans', sans-serif;color:#fff;white-space:nowrap;letter-spacing:0.06px">Continue</div>
<div style="position:absolute;left:433.4px;top:419.8px;width:40.60000000000002px;height:9.6px;border-radius:5px;background:linear-gradient(#868686,#6a6a6a);box-shadow:0 0 0 0.5px rgba(0,0,0,0.2)"></div>
<div style="position:absolute;left:433.4px;top:422.48px;width:40.60000000000002px;text-align:center;font:normal 6.5px/1 'Liberation Sans', sans-serif;color:#fff;white-space:nowrap;letter-spacing:0.06px">Exit</div>
<div style="position:absolute;left:35px;top:20px;width:41.3px;height:1.3999999999999986px;background:#7d838d"></div>
<svg style="position:absolute;left:40px;top:3px" width="30" height="23" viewBox="0 0 30 23"><path d="M14.4 3.8 L17.9 7.6 L23.8 7.0 L20.0 11.3 L24.0 16.9 L17.6 13.9 Q13.5 17.5 8.2 21.8 Q9.0 16.0 11.2 12.8 L6.4 9.4 L12.4 8.0 Z" fill="#e8eaec"/><path d="12.0 9.0 L20.0 13.0" fill="none" stroke="#c4c7cc" stroke-width="0.5"/></svg>
<div style="position:absolute;left:35.2px;top:19.58px;font:normal 19.2px/1 'Liberation Serif', serif;color:#f0f1f3;text-shadow:0.35px 0 0 rgba(240,241,243,0.7);white-space:nowrap;transform:scaleX(0.86);transform-origin:0 0;letter-spacing:-0.2px">NAEP</div>
<div style="position:absolute;left:35px;top:38.2px;width:41.3px;height:1.5999999999999943px;background:#7d838d"></div>
<div style="position:absolute;left:35px;top:42.24px;width:42px;font:bold 3.6px/1 'Liberation Serif', serif;color:#e6e7ea;white-space:nowrap;text-align:justify;text-align-last:justify">NATIONAL ASSESSMENT</div>
<div style="position:absolute;left:39.7px;top:46.84px;width:32.599999999999994px;font:bold 3.6px/1 'Liberation Serif', serif;color:#e6e7ea;white-space:nowrap;text-align:justify;text-align-last:justify">OF EDUCATIONAL</div>
<div style="position:absolute;left:46.6px;top:51.54px;width:19.1px;font:bold 3.6px/1 'Liberation Serif', serif;color:#e6e7ea;white-space:nowrap;text-align:justify;text-align-last:justify">PROGRESS</div>
</body></html>
